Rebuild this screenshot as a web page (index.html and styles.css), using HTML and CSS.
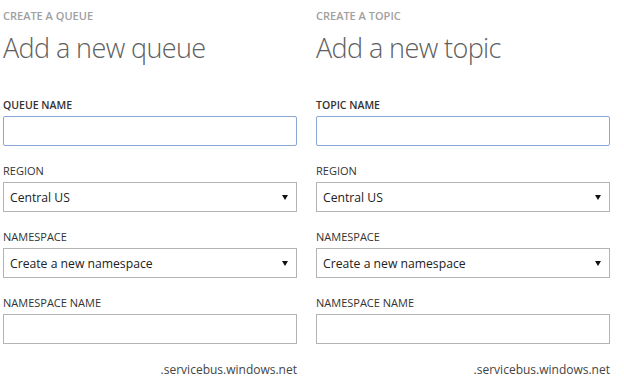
FILE: index.html
```html
<!DOCTYPE html>
<html lang="en">
<head>
    <meta charset="UTF-8">
    <meta name="viewport" content="width=device-width, initial-scale=1.0">
    <title>Service Bus</title>
    <link rel="stylesheet" href="styles.css">
</head>
<body>
    <div class="panels">
        <div class="panel">
            <div class="eyebrow">CREATE A QUEUE</div>
            <h1>Add a new queue</h1>
            <div class="field">
                <label class="strong">QUEUE NAME</label>
                <div class="text-box focus"></div>
            </div>
            <div class="field">
                <label>REGION</label>
                <div class="drop">
                    <span>Central US</span>
                    <span class="arrow"></span>
                </div>
            </div>
            <div class="field">
                <label>NAMESPACE</label>
                <div class="drop">
                    <span>Create a new namespace</span>
                    <span class="arrow"></span>
                </div>
            </div>
            <div class="field">
                <label>NAMESPACE NAME</label>
                <div class="text-box"></div>
                <div class="suffix">.servicebus.windows.net</div>
            </div>
        </div>
        <div class="panel">
            <div class="eyebrow">CREATE A TOPIC</div>
            <h1>Add a new topic</h1>
            <div class="field">
                <label class="strong">TOPIC NAME</label>
                <div class="text-box focus"></div>
            </div>
            <div class="field">
                <label>REGION</label>
                <div class="drop">
                    <span>Central US</span>
                    <span class="arrow"></span>
                </div>
            </div>
            <div class="field">
                <label>NAMESPACE</label>
                <div class="drop">
                    <span>Create a new namespace</span>
                    <span class="arrow"></span>
                </div>
            </div>
            <div class="field">
                <label>NAMESPACE NAME</label>
                <div class="text-box"></div>
                <div class="suffix">.servicebus.windows.net</div>
            </div>
        </div>
    </div>
</body>
</html>
```

FILE: styles.css
```css
* {
    margin: 0;
    padding: 0;
    box-sizing: border-box;
}
body {
    font-family: 'Open Sans', sans-serif;
    background: white;
    color: #333;
}
.panels {
    display: flex;
    gap: 19px;
    padding: 9px 0 0 3px;
}
.panel {
    width: 294px;
}
.eyebrow {
    font-size: 11px;
    line-height: 14px;
    font-weight: 600;
    color: #a0a0a0;
}
h1 {
    font-size: 27px;
    font-weight: 300;
    letter-spacing: -0.6px;
    line-height: 36px;
    color: #606060;
    margin: 7px 0 32px;
}
.field {
    margin-bottom: 18px;
}
.field label {
    display: block;
    font-size: 11px;
    line-height: 14px;
    color: #333;
    margin-bottom: 4px;
}
.field label.strong {
    font-weight: 600;
    font-size: 10.5px;
}
.text-box {
    height: 30px;
    border: 1px solid #b4b4b4;
}
.text-box.focus {
    border-color: #8aa6d8;
    border-radius: 2px;
}
.drop {
    height: 30px;
    border: 1px solid #b4b4b4;
    display: flex;
    align-items: center;
    justify-content: space-between;
    padding: 0 8px 0 6px;
    font-size: 12.2px;
    color: #222;
}
.arrow {
    width: 0;
    height: 0;
    border-left: 3px solid transparent;
    border-right: 3px solid transparent;
    border-top: 5px solid #111;
}
.suffix {
    margin-top: 18px;
    text-align: right;
    font-size: 12px;
    line-height: 16px;
    color: #444;
}
```
